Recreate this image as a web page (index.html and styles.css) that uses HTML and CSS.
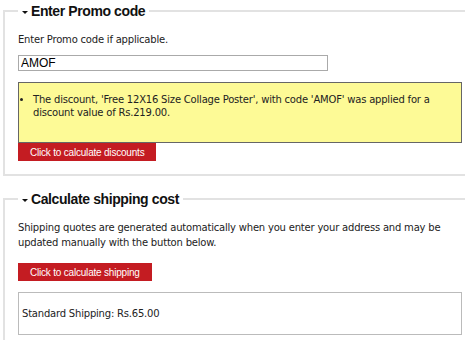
FILE: index.html
```html
<!DOCTYPE html>
<html lang="en">
  <head>
    <meta charset="UTF-8" />
    <title>Cart - Promo and Shipping</title>
    <link rel="stylesheet" href="styles.css">
  </head>
  <body>
    <div class="cart-panel">
      <fieldset class="cart-box">
        <legend><span class="caret"></span>Enter Promo code</legend>
        <p class="note">Enter Promo code if applicable.</p>
        <input type="text" class="promo-input" value="AMOF" />
        <div class="promo-msg">
          <ul>
            <li>The discount, 'Free 12X16 Size Collage Poster', with code 'AMOF' was applied for a discount value of Rs.219.00.</li>
          </ul>
        </div>
        <button class="red-btn">Click to calculate discounts</button>
      </fieldset>

      <fieldset class="cart-box shipping">
        <legend><span class="caret"></span>Calculate shipping cost</legend>
        <p class="note">Shipping quotes are generated automatically when you enter your address and may be updated manually with the button below.</p>
        <button class="red-btn">Click to calculate shipping</button>
        <div class="ship-result">Standard Shipping: Rs.65.00</div>
      </fieldset>
    </div>
  </body>
</html>
```

FILE: styles.css
```css
body {
  background: #fff;
  color: #222;
  font-family: "DejaVu Sans", Verdana, sans-serif;
  font-size: 10px;
  letter-spacing: -0.2px;
  margin: 0;
  overflow: hidden;
}
.cart-panel {
  padding: 3px 0 0 3px;
  width: 480px;
}
.cart-box {
  border: 2px solid #e2e2e2;
  margin: 0 0 15px 0;
  padding: 0 0 13px 13px;
}
.cart-box legend {
  color: #111;
  font-family: "Liberation Sans", Arial, sans-serif;
  font-size: 14px;
  font-weight: bold;
  letter-spacing: -0.4px;
  padding: 0 4px;
}
.caret {
  border-left: 3px solid transparent;
  border-right: 3px solid transparent;
  border-top: 3px solid #111;
  display: inline-block;
  margin-right: 3px;
  vertical-align: middle;
}
.note {
  line-height: 15px;
  margin: 13px 0 8px;
  width: 440px;
}
.promo-input {
  border: 1px solid #aaa;
  box-sizing: border-box;
  color: #000;
  display: block;
  font-family: "Liberation Sans", Arial, sans-serif;
  font-size: 12px;
  height: 16px;
  letter-spacing: 0;
  margin: 0 0 11px;
  padding: 0 2px;
  width: 310px;
}
.promo-msg {
  background: #fdfa96;
  border: 1px solid #666;
  box-sizing: border-box;
  height: 61px;
  width: 444px;
}
.promo-msg ul {
  line-height: 13px;
  margin: 10px 0 0;
  padding: 0 0 0 14px;
}
.red-btn {
  background: #c41c22;
  border: none;
  color: #fff;
  display: block;
  font-family: "Liberation Sans", Arial, sans-serif;
  font-size: 10px;
  height: 18px;
  letter-spacing: -0.2px;
  padding: 0 12px;
}
.shipping .note {
  margin-bottom: 13px;
}
.ship-result {
  border: 1px solid #bbb;
  box-sizing: border-box;
  height: 43px;
  line-height: 41px;
  margin-top: 11px;
  padding-left: 3px;
  width: 444px;
}
```
